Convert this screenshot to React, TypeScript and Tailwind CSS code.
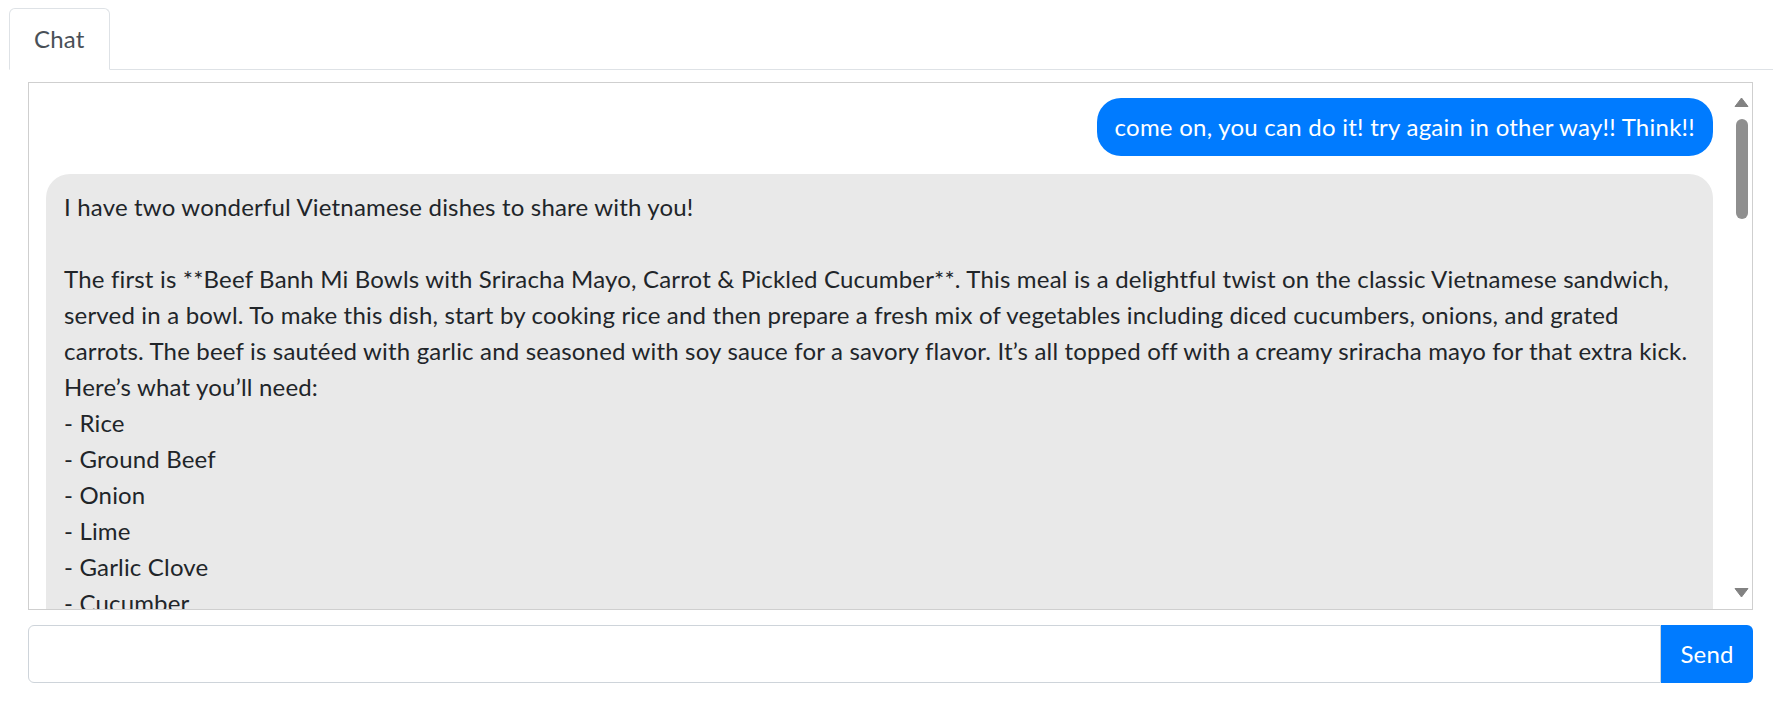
import React from "react";

const lines = [
  "I have two wonderful Vietnamese dishes to share with you!",
  "",
  "The first is **Beef Banh Mi Bowls with Sriracha Mayo, Carrot & Pickled Cucumber**. This meal is a delightful twist on the classic Vietnamese sandwich,",
  "served in a bowl. To make this dish, start by cooking rice and then prepare a fresh mix of vegetables including diced cucumbers, onions, and grated",
  "carrots. The beef is sautéed with garlic and seasoned with soy sauce for a savory flavor. It’s all topped off with a creamy sriracha mayo for that extra kick.",
  "Here’s what you’ll need:",
  "- Rice",
  "- Ground Beef",
  "- Onion",
  "- Lime",
  "- Garlic Clove",
  "- Cucumber",
];

function Scrollbar() {
  return (
    <div className="flex w-[21px] shrink-0 flex-col items-center pt-[14px] pb-[11px]">
      <svg width="15" height="10" viewBox="0 0 15 10" className="block">
        <path d="M7.5 1 L14 9.5 L1 9.5 Z" fill="#828282" stroke="#828282" strokeWidth="1" strokeLinejoin="round" />
      </svg>
      <div className="mt-[12px] h-[100px] w-[12px] rounded-full bg-[#8f8f8f]" />
      <div className="flex-1" />
      <svg width="15" height="10" viewBox="0 0 15 10" className="block">
        <path d="M1 0.5 L14 0.5 L7.5 9 Z" fill="#828282" stroke="#828282" strokeWidth="1" strokeLinejoin="round" />
      </svg>
    </div>
  );
}

export default function App() {
  return (
    <div className="h-[715px] w-[1791px] overflow-hidden bg-white font-['Lato','Open_Sans',sans-serif] text-[24px] leading-[36px] tracking-[0.18px] text-[#212529]">
      <div className="pl-[9px] pr-[18px] pt-[8px]">
        <div className="flex border-b border-[#dee2e6]">
          <div className="-mb-px rounded-t-[6px] border border-[#dee2e6] border-b-white bg-white px-[24px] pt-[12px] pb-[12px] text-[#495057]">
            Chat
          </div>
        </div>
      </div>
      <div className="pl-[28px] pr-[38px] pt-[12px]">
        <div className="flex h-[528px] border border-[#cfcfcf]">
          <div className="flex min-w-0 flex-1 flex-col overflow-hidden pl-[17px] pr-[18px] pt-[15px]">
            <div className="flex justify-end">
              <div className="rounded-[24px] bg-[#007bff] px-[18px] py-[11px] tracking-[0.25px] text-white">
                come on, you can do it! try again in other way!! Think!!
              </div>
            </div>
            <div className="mt-[18px] rounded-[24px] bg-[#e9e9e9] px-[18px] pt-[15px] pb-[15px]">
              {lines.map((l, i) => (
                <div key={i} className="h-[36px] whitespace-nowrap">
                  {l}
                </div>
              ))}
            </div>
          </div>
          <Scrollbar />
        </div>
        <div className="mt-[15px] flex h-[58px]">
          <input
            type="text"
            className="min-w-0 flex-1 rounded-l-[6px] border border-[#ced4da] bg-white px-[18px] text-[24px] text-[#495057] outline-none"
          />
          <button className="w-[92px] rounded-r-[6px] bg-[#007bff] text-[24px] text-white">
            Send
          </button>
        </div>
      </div>
    </div>
  );
}
